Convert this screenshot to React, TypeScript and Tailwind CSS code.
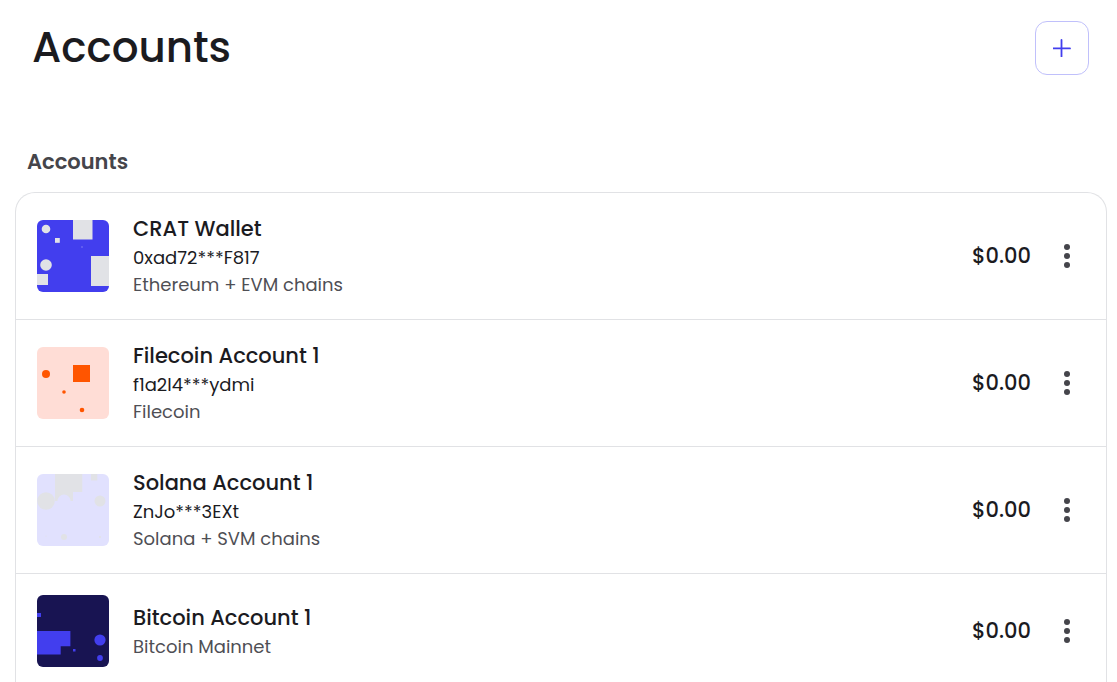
import type { ReactNode } from 'react'

interface Account {
  name: string
  address?: string
  network: string
  balance: string
  avatar: ReactNode
}

const accounts: Account[] = [
  {
    name: 'CRAT Wallet',
    address: '0xad72***F817',
    network: 'Ethereum + EVM chains',
    balance: '$0.00',
    avatar: (
      <>
        <rect width="72" height="72" fill="#423eee" />
        <g fill="#e1e2e6">
          <circle cx="9" cy="9" r="4.3" />
          <rect x="36" width="19.5" height="19.5" />
          <rect x="18" y="18" width="4.8" height="4.8" />
          <circle cx="9" cy="45" r="5.8" />
          <rect y="54" width="11" height="11" />
          <rect x="54" y="36" width="18" height="30" />
        </g>
        <rect x="44" y="26" width="2" height="2" fill="#5f5bf0" />
      </>
    )
  },
  {
    name: 'Filecoin Account 1',
    address: 'f1a2l4***ydmi',
    network: 'Filecoin',
    balance: '$0.00',
    avatar: (
      <>
        <rect width="72" height="72" fill="#ffddd6" />
        <g fill="#ff5500">
          <circle cx="9" cy="27" r="4" />
          <rect x="36" y="18" width="17" height="17" />
          <circle cx="27" cy="45" r="1.8" />
          <circle cx="45" cy="63" r="2.3" />
        </g>
      </>
    )
  },
  {
    name: 'Solana Account 1',
    address: 'ZnJo***3EXt',
    network: 'Solana + SVM chains',
    balance: '$0.00',
    avatar: (
      <>
        <rect width="72" height="72" fill="#e1e1fe" />
        <g fill="#e1e2e6">
          <path d="M18 0h27.3v18H36v9H18z" />
          <circle cx="9" cy="27" r="8.8" />
          <circle cx="63" cy="27" r="5.5" />
          <rect x="54" width="6.3" height="6.5" />
          <circle cx="27" cy="63" r="3" />
          <circle cx="9" cy="62" r="0.6" />
          <circle cx="63" cy="63" r="1" />
        </g>
        <circle cx="27" cy="27" r="6.5" fill="#e1e1fe" />
      </>
    )
  },
  {
    name: 'Bitcoin Account 1',
    network: 'Bitcoin Mainnet',
    balance: '$0.00',
    avatar: (
      <>
        <rect width="72" height="72" fill="#181452" />
        <g fill="#423eee">
          <rect y="18" width="4" height="4" />
          <path d="M0 36h33.4v15.2H23.7v8.4H0z" />
          <rect x="36" y="54" width="2.5" height="2.5" />
          <circle cx="63" cy="45" r="5.6" />
          <circle cx="63" cy="63" r="2.9" />
        </g>
      </>
    )
  }
]

function AccountRow({ name, address, network, balance, avatar }: Account) {
  return (
    <li className="flex items-center px-[21px] py-[21px]">
      <svg viewBox="0 0 72 72" className="size-[72px] shrink-0 rounded-md" aria-hidden="true">
        {avatar}
      </svg>

      <div className="ml-6 min-w-0 flex-1">
        <h3 className="text-[21px] leading-[30px] font-medium">{name}</h3>
        {address && <p className="text-[18px] leading-[27px]">{address}</p>}
        <p className="text-[18px] leading-[27px] text-[#4f4f55]">{network}</p>
      </div>

      <span className="text-[21px] leading-[30px] font-medium">{balance}</span>

      <button
        type="button"
        aria-label={`${name} options`}
        className="ml-[18px] flex size-9 items-center justify-center text-[#45454b]"
      >
        <svg viewBox="0 0 6 24" className="h-6 w-[6px]" fill="currentColor" aria-hidden="true">
          <circle cx="3" cy="3" r="3" />
          <circle cx="3" cy="12" r="3" />
          <circle cx="3" cy="21" r="3" />
        </svg>
      </button>
    </li>
  )
}

export default function App() {
  return (
    <main className="min-h-screen bg-white pr-[10px] pl-[15px] font-['Poppins','Inter',sans-serif] text-[#1b1b1f]">
      <header className="flex items-center justify-between pt-[21px] pr-[18px] pl-[17px]">
        <h1 className="text-[42px] leading-[54px] font-medium">Accounts</h1>

        <button
          type="button"
          aria-label="Add account"
          className="flex size-[54px] items-center justify-center rounded-xl border border-[#c0c0fb] text-[#423eee]"
        >
          <svg
            viewBox="0 0 18 18"
            className="size-[18px]"
            stroke="currentColor"
            strokeWidth="1.8"
            strokeLinecap="round"
            aria-hidden="true"
          >
            <path d="M8.5 0.9v16.6M0.2 9.4h16.8" />
          </svg>
        </button>
      </header>

      <section className="pt-[72px]">
        <h2 className="pl-3 text-[21px] leading-[30px] font-semibold text-[#45454b]">
          Accounts
        </h2>

        <ul className="mt-[15px] divide-y divide-[#e1e2e5] rounded-t-[20px] border border-b-0 border-[#e1e2e5]">
          {accounts.map(account => (
            <AccountRow key={account.name} {...account} />
          ))}
        </ul>
      </section>
    </main>
  )
}
